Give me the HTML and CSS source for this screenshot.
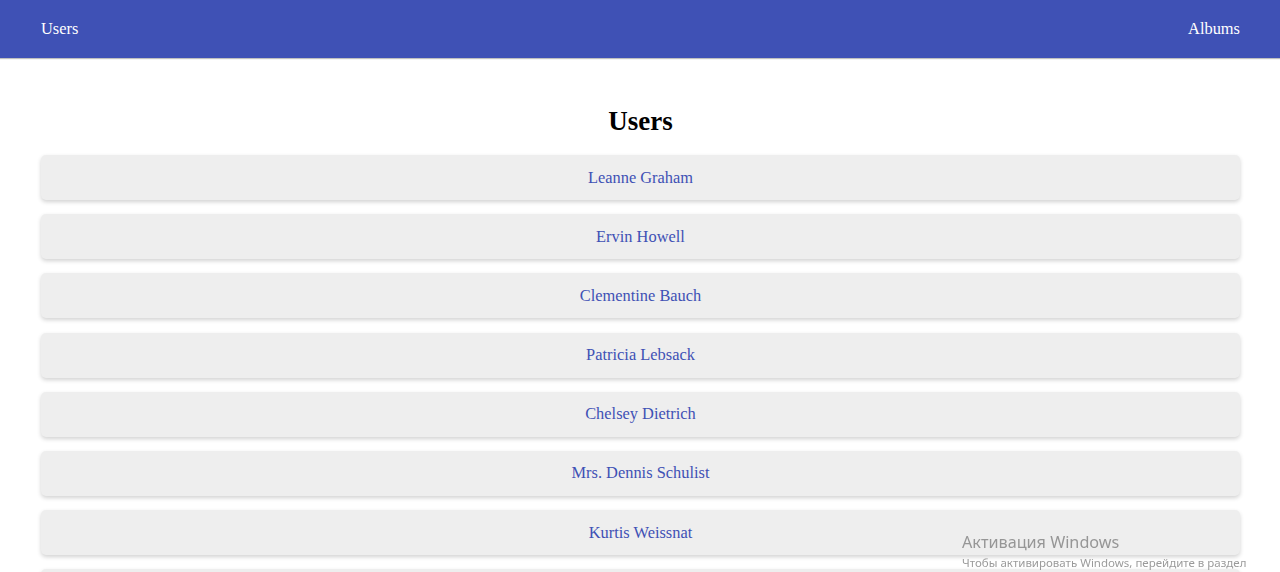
FILE: index.html
```html
<!DOCTYPE html>
<html lang="en">
<head>
<meta charset="utf-8">
<title>Users</title>
<link rel="stylesheet" href="styles.css">
</head>
<body>
<header class="topbar">
  <a class="nav-link" href="#">Users</a>
  <a class="nav-link" href="#">Albums</a>
</header>
<main class="page">
  <h1 class="title">Users</h1>
  <ul class="user-list">
    <li class="user-card"><a class="user-link" href="#">Leanne Graham</a></li>
    <li class="user-card"><a class="user-link" href="#">Ervin Howell</a></li>
    <li class="user-card"><a class="user-link" href="#">Clementine Bauch</a></li>
    <li class="user-card"><a class="user-link" href="#">Patricia Lebsack</a></li>
    <li class="user-card"><a class="user-link" href="#">Chelsey Dietrich</a></li>
    <li class="user-card"><a class="user-link" href="#">Mrs. Dennis Schulist</a></li>
    <li class="user-card"><a class="user-link" href="#">Kurtis Weissnat</a></li>
    <li class="user-card"><a class="user-link" href="#">Nicholas Runolfsdottir V</a></li>
    <li class="user-card"><a class="user-link" href="#">Glenna Reichert</a></li>
    <li class="user-card"><a class="user-link" href="#">Clementina DuBuque</a></li>
  </ul>
</main>
<div class="activation">
  <div class="activation-title">Активация Windows</div>
  <div class="activation-sub">Чтобы активировать Windows, перейдите в раздел</div>
</div>
</body>
</html>
```
FILE: styles.css
```css
html, body {
  margin: 0;
  padding: 0;
}
body {
  font-family: "Liberation Serif", "Times New Roman", serif;
  font-size: 16px;
  color: #000;
  background: #fff;
}
.topbar {
  height: 58px;
  background: #3f51b5;
  display: flex;
  align-items: center;
  justify-content: space-between;
  padding: 0 40px 0 41px;
  box-sizing: border-box;
  box-shadow: 0 1px 1px rgba(0,0,0,0.25);
}
.nav-link {
  color: #fff;
  text-decoration: none;
  font-size: 16.4px;
  line-height: 20px;
  margin-top: -1px;
}
.page {
  padding: 0 40px 40px 41px;
}
.title {
  margin: 48px 0 18px;
  font-size: 27px;
  line-height: 31px;
  font-weight: bold;
  text-align: center;
}
.user-list {
  list-style: none;
  margin: 0;
  padding: 0;
  display: flex;
  flex-direction: column;
  gap: 14.2px;
}
.user-card {
  height: 45px;
  background: #eeeeee;
  border-radius: 5px;
  box-shadow: 0 2px 4px rgba(0,0,0,0.18);
  display: flex;
  align-items: center;
  justify-content: center;
}
.user-link {
  color: #3f51b5;
  text-decoration: none;
  font-size: 16.4px;
}
.activation {
  position: fixed;
  left: 962px;
  top: 531px;
  width: 286px;
  overflow: hidden;
  white-space: nowrap;
  font-family: "Noto Sans", "Open Sans", sans-serif;
  color: rgba(120,120,120,0.75);
}
.activation-title {
  font-size: 16.2px;
  line-height: 22px;
}
.activation-sub {
  font-size: 11.5px;
  line-height: 19px;
}
```
